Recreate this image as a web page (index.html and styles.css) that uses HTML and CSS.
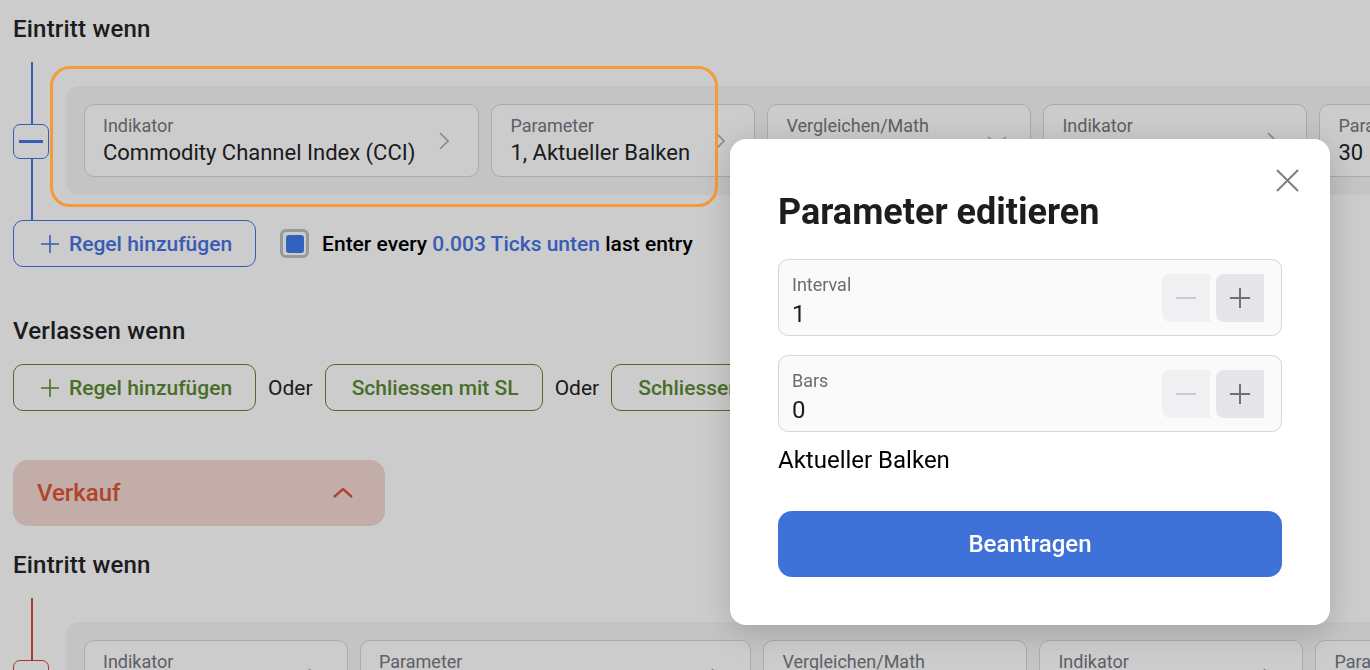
FILE: index.html
```html
<!DOCTYPE html>
<html lang="de">

<head>
  <meta charset="UTF-8">
  <meta name="viewport" content="width=device-width, initial-scale=1.0">
  <title>Strategie bearbeiten</title>
  <link rel="stylesheet" href="styles.css">
</head>

<body>
  <main class="page">
    <h3 class="section-title">Eintritt wenn</h3>

    <div class="rule-block buy">
      <div class="rail">
        <button class="collapse-btn"><span class="minus"></span></button>
      </div>
      <div class="rule-wrap">
        <div class="highlight"></div>
        <div class="conditions">
          <div class="chip">
            <div class="chip-text">
              <div class="chip-label">Indikator</div>
              <div class="chip-value">Commodity Channel Index (CCI)</div>
            </div>
            <svg class="chevron" viewBox="0 0 10 18"><path d="M1 1l8 8-8 8" /></svg>
          </div>
          <div class="chip">
            <div class="chip-text">
              <div class="chip-label">Parameter</div>
              <div class="chip-value">1, Aktueller Balken</div>
            </div>
            <svg class="chevron" viewBox="0 0 10 18"><path d="M1 1l8 8-8 8" /></svg>
          </div>
          <div class="chip">
            <div class="chip-text">
              <div class="chip-label">Vergleichen/Math</div>
              <div class="chip-value">Kleiner als</div>
            </div>
            <svg class="chevron-down" viewBox="0 0 20 10"><path d="M1 1l9 8 9-8" /></svg>
          </div>
          <div class="chip">
            <div class="chip-text">
              <div class="chip-label">Indikator</div>
              <div class="chip-value">Wert</div>
            </div>
            <svg class="chevron" viewBox="0 0 10 18"><path d="M1 1l8 8-8 8" /></svg>
          </div>
          <div class="chip">
            <div class="chip-text">
              <div class="chip-label">Parameter</div>
              <div class="chip-value">30</div>
            </div>
            <svg class="chevron" viewBox="0 0 10 18"><path d="M1 1l8 8-8 8" /></svg>
          </div>
        </div>
      </div>
    </div>

    <div class="rule-actions">
      <button class="outline-btn blue">
        <svg class="plus-icon" viewBox="0 0 20 20"><path d="M10 1v18M1 10h18" /></svg>
        Regel hinzufügen
      </button>
      <label class="check">
        <span class="check-box"></span>
        <span>Enter every <span class="accent">0.003 Ticks unten</span> last entry</span>
      </label>
    </div>

    <h3 class="section-title exit-title">Verlassen wenn</h3>

    <div class="exit-row">
      <button class="outline-btn green">
        <svg class="plus-icon" viewBox="0 0 20 20"><path d="M10 1v18M1 10h18" /></svg>
        Regel hinzufügen
      </button>
      <span class="or">Oder</span>
      <button class="outline-btn green">Schliessen mit SL</button>
      <span class="or">Oder</span>
      <button class="outline-btn green">Schliessen mit TP</button>
    </div>

    <div class="side-toggle">
      <span>Verkauf</span>
      <svg class="chevron-up" viewBox="0 0 20 10"><path d="M1 9l9-8 9 8" /></svg>
    </div>

    <h3 class="section-title sell-title">Eintritt wenn</h3>

    <div class="rule-block sell">
      <div class="rail">
        <button class="collapse-btn"><span class="minus"></span></button>
      </div>
      <div class="rule-wrap">
        <div class="conditions">
          <div class="chip">
            <div class="chip-text">
              <div class="chip-label">Indikator</div>
              <div class="chip-value">Momentum</div>
            </div>
            <svg class="chevron" viewBox="0 0 10 18"><path d="M1 1l8 8-8 8" /></svg>
          </div>
          <div class="chip">
            <div class="chip-text">
              <div class="chip-label">Parameter</div>
              <div class="chip-value">1, Aktueller Balken, Schlusskurs</div>
            </div>
            <svg class="chevron" viewBox="0 0 10 18"><path d="M1 1l8 8-8 8" /></svg>
          </div>
          <div class="chip">
            <div class="chip-text">
              <div class="chip-label">Vergleichen/Math</div>
              <div class="chip-value">Größer als</div>
            </div>
            <svg class="chevron-down" viewBox="0 0 20 10"><path d="M1 1l9 8 9-8" /></svg>
          </div>
          <div class="chip">
            <div class="chip-text">
              <div class="chip-label">Indikator</div>
              <div class="chip-value">Wert</div>
            </div>
            <svg class="chevron" viewBox="0 0 10 18"><path d="M1 1l8 8-8 8" /></svg>
          </div>
          <div class="chip">
            <div class="chip-text">
              <div class="chip-label">Parameter</div>
              <div class="chip-value">70</div>
            </div>
            <svg class="chevron" viewBox="0 0 10 18"><path d="M1 1l8 8-8 8" /></svg>
          </div>
        </div>
      </div>
    </div>
  </main>

  <div class="backdrop"></div>

  <div class="modal">
    <button class="modal-close">
      <svg viewBox="0 0 24 24"><path d="M1 1l22 22M23 1L1 23" /></svg>
    </button>
    <h2 class="modal-title">Parameter editieren</h2>

    <div class="field">
      <div class="field-text">
        <div class="field-label">Interval</div>
        <div class="field-value">1</div>
      </div>
      <div class="stepper">
        <button class="step minus-step"><svg viewBox="0 0 20 20"><path d="M0 10h20" /></svg></button>
        <button class="step plus-step"><svg viewBox="0 0 20 20"><path d="M10 0v20M0 10h20" /></svg></button>
      </div>
    </div>

    <div class="field">
      <div class="field-text">
        <div class="field-label">Bars</div>
        <div class="field-value">0</div>
      </div>
      <div class="stepper">
        <button class="step minus-step"><svg viewBox="0 0 20 20"><path d="M0 10h20" /></svg></button>
        <button class="step plus-step"><svg viewBox="0 0 20 20"><path d="M10 0v20M0 10h20" /></svg></button>
      </div>
    </div>

    <p class="field-summary">Aktueller Balken</p>

    <button class="apply-btn">Beantragen</button>
  </div>
</body>

</html>
```

FILE: styles.css
```css
html,
body {
  margin: 0;
  padding: 0;
  height: 100%;
  overflow: hidden;
}

body {
  font-family: Roboto, "Noto Sans", Arial, sans-serif;
  background: #fff;
  color: #232326;
}

button {
  font-family: inherit;
  cursor: pointer;
}

.page {
  padding: 15px 0 0 13px;
}

.section-title {
  margin: 0;
  font-size: 24px;
  font-weight: 500;
  line-height: 28px;
  letter-spacing: 0.2px;
}

.exit-title {
  margin-top: 50px;
}

.sell-title {
  margin-top: 25px;
}

/* rule block with vertical rail */

.rule-block {
  display: flex;
  margin-top: 19px;
  --accent: #4674e4;
}

.rule-block.sell {
  --accent: #d24a33;
}

.rail {
  position: relative;
  width: 36px;
  flex-shrink: 0;
  display: flex;
  align-items: center;
}

.rail::before {
  content: "";
  position: absolute;
  left: 18px;
  top: 0;
  bottom: 0;
  width: 2px;
  background: var(--accent);
}

.collapse-btn {
  position: relative;
  width: 36px;
  height: 35px;
  padding: 0;
  display: flex;
  align-items: center;
  justify-content: center;
  background: #fff;
  border: 1px solid var(--accent);
  border-radius: 7px;
}

.minus {
  width: 24px;
  height: 3px;
  background: var(--accent);
}

.rule-wrap {
  position: relative;
  padding: 24px 0 25px 17px;
}

.highlight {
  position: absolute;
  left: 1px;
  top: 4px;
  width: 668px;
  height: 141px;
  box-sizing: border-box;
  border: 3px solid #f39a3b;
  border-radius: 20px;
  z-index: 11;
  pointer-events: none;
}

.conditions {
  display: flex;
  gap: 12px;
  width: max-content;
  padding: 18px;
  background: #f5f5f5;
  border-radius: 13px;
}

.chip {
  display: flex;
  align-items: center;
  gap: 24px;
  min-width: 264px;
  height: 73px;
  box-sizing: border-box;
  padding: 0 29px 0 18px;
  background: #fff;
  border: 1px solid #d6d6d8;
  border-radius: 10px;
}

.chip-text {
  flex: 1;
}

.chip-label {
  font-size: 18px;
  line-height: 22px;
  color: #76787f;
}

.chip-value {
  margin-top: 3px;
  font-size: 22px;
  line-height: 26px;
  white-space: nowrap;
}

.chevron {
  width: 10px;
  height: 18px;
  flex-shrink: 0;
  fill: none;
  stroke: #aeaeb3;
  stroke-width: 1.6;
}

.chevron-down {
  width: 20px;
  height: 10px;
  flex-shrink: 0;
  margin-right: -6px;
  fill: none;
  stroke: #aeaeb3;
  stroke-width: 1.6;
}

/* buttons under the rules */

.rule-actions {
  display: flex;
  align-items: center;
  gap: 24px;
}

.outline-btn {
  display: inline-flex;
  align-items: center;
  gap: 9px;
  height: 47px;
  padding: 0 23px 0 26px;
  background: transparent;
  border: 1px solid;
  border-radius: 10px;
  font-size: 21px;
  font-weight: 500;
}

.outline-btn.blue {
  color: #4674e4;
  border-color: #4674e4;
}

.outline-btn.green {
  color: #5c8a35;
  border-color: #5c8a35;
}

.plus-icon {
  width: 20px;
  height: 20px;
  fill: none;
  stroke: currentColor;
  stroke-width: 1.6;
}

.check {
  display: flex;
  align-items: center;
  gap: 13px;
  font-size: 21px;
  font-weight: 500;
  color: #000;
}

.check-box {
  width: 29px;
  height: 29px;
  box-sizing: border-box;
  display: flex;
  align-items: center;
  justify-content: center;
  border: 3px solid #c0c0c2;
  border-radius: 6px;
}

.check-box::after {
  content: "";
  width: 18px;
  height: 18px;
  background: #3f7bf0;
  border-radius: 3px;
}

.accent {
  color: #4674e4;
}

.exit-row {
  display: flex;
  align-items: center;
  gap: 12px;
  margin-top: 19px;
  white-space: nowrap;
}

.or {
  font-size: 21px;
  color: #232326;
}

/* Verkauf toggle */

.side-toggle {
  display: flex;
  align-items: center;
  justify-content: space-between;
  width: 372px;
  height: 66px;
  box-sizing: border-box;
  margin-top: 49px;
  padding: 0 32px 0 24px;
  background: #f3d9d2;
  border-radius: 15px;
  color: #df5536;
  font-size: 24px;
  font-weight: 500;
}

.chevron-up {
  width: 20px;
  height: 10px;
  fill: none;
  stroke: #df5536;
  stroke-width: 2.4;
}

/* modal */

.backdrop {
  position: fixed;
  top: 0;
  left: 0;
  width: 100%;
  height: 100%;
  background: rgba(0, 0, 0, 0.2);
  z-index: 10;
}

.modal {
  position: fixed;
  top: 139px;
  right: 40px;
  width: 600px;
  box-sizing: border-box;
  padding: 51px 48px 48px;
  background: #fff;
  border-radius: 16px;
  box-shadow: 0 6px 30px rgba(0, 0, 0, 0.18);
  z-index: 20;
}

.modal-close {
  position: absolute;
  top: 30px;
  right: 31px;
  width: 23px;
  height: 23px;
  padding: 0;
  background: none;
  border: none;
}

.modal-close svg {
  display: block;
  width: 23px;
  height: 23px;
  fill: none;
  stroke: #7d7d85;
  stroke-width: 2;
}

.modal-title {
  margin: 0;
  font-size: 36px;
  font-weight: 700;
  line-height: 44px;
  color: #1d1d1f;
}

.field {
  display: flex;
  align-items: center;
  height: 77px;
  box-sizing: border-box;
  margin-top: 25px;
  padding: 0 17px 0 13px;
  background: #fafafa;
  border: 1px solid #d6d6db;
  border-radius: 10px;
}

.field+.field {
  margin-top: 19px;
}

.field-text {
  padding-top: 6px;
}

.field-label {
  font-size: 18px;
  line-height: 22px;
  color: #6b6c73;
}

.field-value {
  margin-top: 4px;
  font-size: 24px;
  line-height: 28px;
  color: #1d1d1f;
}

.stepper {
  display: flex;
  gap: 6px;
  margin-left: auto;
}

.step {
  width: 48px;
  height: 48px;
  padding: 0;
  display: flex;
  align-items: center;
  justify-content: center;
  border: none;
  border-radius: 8px 0 0 8px;
}

.step svg {
  width: 20px;
  height: 20px;
  fill: none;
  stroke-width: 2;
}

.minus-step {
  background: #f0f0f2;
}

.minus-step svg {
  stroke: #cbcbd0;
}

.plus-step {
  background: #e6e6ea;
}

.plus-step svg {
  stroke: #70707a;
}

.field-summary {
  margin: 14px 0 0;
  font-size: 24px;
  line-height: 28px;
  color: #000;
}

.apply-btn {
  display: block;
  width: 100%;
  height: 66px;
  margin-top: 37px;
  background: #3f72d8;
  color: #fff;
  border: none;
  border-radius: 14px;
  font-size: 24px;
  font-weight: 500;
}
```
